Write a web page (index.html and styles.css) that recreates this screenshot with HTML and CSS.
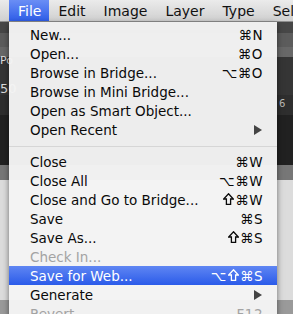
FILE: index.html
```html
<!DOCTYPE html>
<html>
<head>
<meta charset="utf-8">
<link rel="stylesheet" href="styles.css">
</head>
<body>
<div class="menubar">
  <span class="mb-item active">File</span>
  <span class="mb-item">Edit</span>
  <span class="mb-item">Image</span>
  <span class="mb-item">Layer</span>
  <span class="mb-item">Type</span>
  <span class="mb-item">Select</span>
</div>
<div class="workspace">
  <span class="bg-label po">Po</span>
  <span class="bg-label fifty">50</span>
  <span class="bg-label six">6</span>
  <div class="menu">
    <div class="row"><span>New...</span><span class="key">⌘N</span></div>
    <div class="row"><span>Open...</span><span class="key">⌘O</span></div>
    <div class="row"><span>Browse in Bridge...</span><span class="key">⌥⌘O</span></div>
    <div class="row"><span>Browse in Mini Bridge...</span></div>
    <div class="row"><span>Open as Smart Object...</span></div>
    <div class="row"><span>Open Recent</span><span class="arrow"></span></div>
    <div class="sep"></div>
    <div class="row"><span>Close</span><span class="key">⌘W</span></div>
    <div class="row"><span>Close All</span><span class="key">⌥⌘W</span></div>
    <div class="row"><span>Close and Go to Bridge...</span><span class="key"><svg class="shift" viewBox="0 0 11 12" width="11" height="12"><path d="M5.5 0.8 L10.3 6 L7.6 6 L7.6 11.3 L3.4 11.3 L3.4 6 L0.7 6 Z"/></svg>⌘W</span></div>
    <div class="row"><span>Save</span><span class="key">⌘S</span></div>
    <div class="row"><span>Save As...</span><span class="key"><svg class="shift" viewBox="0 0 11 12" width="11" height="12"><path d="M5.5 0.8 L10.3 6 L7.6 6 L7.6 11.3 L3.4 11.3 L3.4 6 L0.7 6 Z"/></svg>⌘S</span></div>
    <div class="row disabled"><span>Check In...</span></div>
    <div class="row selected"><span>Save for Web...</span><span class="key">⌥<svg class="shift" viewBox="0 0 11 12" width="11" height="12"><path d="M5.5 0.8 L10.3 6 L7.6 6 L7.6 11.3 L3.4 11.3 L3.4 6 L0.7 6 Z"/></svg>⌘S</span></div>
    <div class="row"><span>Generate</span><span class="arrow"></span></div>
    <div class="row disabled"><span>Revert</span><span class="key">F12</span></div>
  </div>
</div>
</body>
</html>
```
FILE: styles.css
```css
html, body {
  margin: 0;
  padding: 0;
}
body {
  width: 293px;
  height: 314px;
  overflow: hidden;
  font-family: "DejaVu Sans", sans-serif;
  background: #2a2a2a;
}
.menubar {
  height: 22px;
  display: flex;
  align-items: stretch;
  padding-left: 9px;
  background: linear-gradient(#ebebeb, #d0d0d0);
  box-sizing: border-box;
  border-bottom: 1px solid #8e8e8e;
  font-size: 14px;
  color: #111;
  white-space: nowrap;
}
.mb-item {
  padding: 0 9px;
  display: flex;
  align-items: center;
  line-height: 1;
}
.mb-item.active {
  background: linear-gradient(#6a8ef5, #2f5ee9);
  color: #fff;
  padding: 0 8px 0 9px;
}
.workspace {
  position: relative;
  height: 292px;
  background: linear-gradient(
    #474747 0px, #474747 11px,
    #5c5c5c 11px, #5c5c5c 25px,
    #686868 25px, #686868 35px,
    #353535 35px, #353535 73px,
    #2e2e2e 73px, #2e2e2e 93px,
    #212121 93px, #212121 143px,
    #777777 143px, #777777 158px,
    #dcdcdc 158px, #dcdcdc 278px,
    #9a9a9a 278px);
}
.bg-label {
  position: absolute;
  font-size: 11px;
  color: #ddd;
  font-family: "DejaVu Sans", sans-serif;
}
.po { left: 0; top: 32px; }
.fifty { left: 0; top: 59px; font-size: 13px; }
.six { left: 279px; top: 76px; font-size: 10px; color: #bbb; }
.menu {
  position: absolute;
  left: 9px;
  top: 0;
  width: 268px;
  height: 300px;
  padding-top: 3px;
  box-sizing: border-box;
  background: rgba(244, 244, 244, 0.97);
  box-shadow: 0 2px 6px rgba(0, 0, 0, 0.5);
  font-size: 13.5px;
  color: #0a0a0a;
}
.row {
  height: 19px;
  display: flex;
  align-items: center;
  justify-content: space-between;
  padding: 0 14px 0 21px;
  white-space: nowrap;
}
.key {
  display: flex;
  align-items: center;
  letter-spacing: 0.5px;
}
.shift {
  fill: none;
  stroke: currentColor;
  stroke-width: 1.3;
  stroke-linejoin: miter;
  margin: 0 1px 1px 1px;
}
.row.disabled {
  color: #a3a3a3;
}
.row.selected {
  background: linear-gradient(#5f86f3, #2b5be9);
  color: #fff;
}
.sep {
  height: 13px;
  display: flex;
  align-items: center;
}
.sep::before {
  content: "";
  flex: 1;
  height: 1px;
  background: #d6d6d6;
  margin-top: 2px;
}
.arrow {
  width: 0;
  height: 0;
  border-top: 5px solid transparent;
  border-bottom: 5px solid transparent;
  border-left: 8px solid #444;
  margin-right: 1px;
}
```
